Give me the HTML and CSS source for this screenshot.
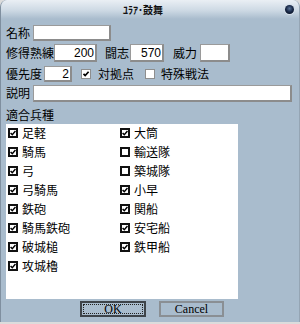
FILE: index.html
```html
<!DOCTYPE html>
<html lang="ja">
<head>
  <meta charset="UTF-8" />
  <title>ﾕﾗｱ･鼓舞</title>
  <link rel="stylesheet" href="styles.css">
</head>
<body>
  <div class="window">
    <div class="titlebar">
      <span class="title">ﾕﾗｱ･鼓舞</span>
      <span class="close"></span>
    </div>

    <div class="content">
      <div class="row r1">
        <span class="lbl">名称</span>
        <span class="field f-name"></span>
      </div>

      <div class="row r2">
        <span class="lbl">修得熟練</span>
        <span class="field f-skill">200</span>
        <span class="lbl l-spirit">闘志</span>
        <span class="field f-spirit">570</span>
        <span class="lbl l-power">威力</span>
        <span class="field f-power"></span>
      </div>

      <div class="row r3">
        <span class="lbl">優先度</span>
        <span class="field f-prio">2</span>
        <span class="box flat on c-base"><svg viewBox="0 0 8 8"><polyline points="1.5,3.8 3.2,5.6 6.6,1.8" /></svg></span>
        <span class="lbl l-base">対拠点</span>
        <span class="box flat c-special"></span>
        <span class="lbl l-special">特殊戦法</span>
      </div>

      <div class="row r4">
        <span class="lbl">説明</span>
        <span class="field f-desc"></span>
      </div>

      <div class="row r5">
        <span class="lbl">適合兵種</span>
      </div>

      <div class="list" id="list"></div>

      <div class="buttons">
        <button class="btn btn-ok"><span>OK</span></button>
        <button class="btn btn-cancel">Cancel</button>
      </div>
    </div>
  </div>

  <script>
    const units = [
      ['足軽', true], ['騎馬', true], ['弓', true], ['弓騎馬', true],
      ['鉄砲', true], ['騎馬鉄砲', true], ['破城槌', true], ['攻城櫓', true],
      ['大筒', true], ['輸送隊', false], ['築城隊', false], ['小早', true],
      ['関船', true], ['安宅船', true], ['鉄甲船', true]
    ];
    const list = document.getElementById('list');
    const tick = '<svg viewBox="0 0 6 6"><polyline points="0.6,2.9 2.3,4.7 5.5,1" /></svg>';

    units.forEach(([name, on]) => {
      const item = document.createElement('div');
      item.className = 'item';
      item.innerHTML = `<span class="box">${on ? tick : ''}</span><span class="name">${name}</span>`;
      list.appendChild(item);
    });
  </script>
</body>
</html>
```

FILE: styles.css
```css
* { margin: 0; padding: 0; box-sizing: border-box; }

html, body {
  width: 100%;
  height: 100%;
  background-color: #dcdcdc;
  font-family: "Noto Sans CJK JP", "Noto Sans", sans-serif;
  font-size: 12px;
  color: #000;
}

.window {
  width: 300px;
  height: 322px;
  background-color: #a9bccd;
  border-radius: 7px 7px 0 0;
  border-left: 1px solid #7f8f9f;
  border-right: 1px solid #95a5b4;
  display: flex;
  flex-direction: column;
  overflow: hidden;
}

.titlebar {
  height: 19px;
  flex-shrink: 0;
  display: flex;
  align-items: center;
  padding-right: 5px;
  background: linear-gradient(#eaeff4, #cdd9e4 55%, #a9bccd);
}

.title {
  flex: 1;
  text-align: center;
  font-size: 10px;
  line-height: 19px;
  font-weight: bold;
  color: #111;
}

.close {
  width: 9px;
  height: 9px;
  border-radius: 50%;
  background: radial-gradient(circle at 50% 40%, #5a7396 0, #1c2d4c 45%, #0e1a30 70%);
  box-shadow: 0 0 0 1px #d3dde8;
}

.content {
  flex: 1;
  display: flex;
  flex-direction: column;
  padding: 5px 0 0 5px;
}

.row {
  display: flex;
  align-items: center;
}

.lbl {
  line-height: 16px;
  white-space: nowrap;
}

.field {
  display: block;
  background-color: #fff;
  border: 1px solid #9a9a9a;
  border-right: 2px solid #8c8c8c;
  border-bottom: 2px solid #8c8c8c;
  font-family: "Liberation Sans", sans-serif;
  font-size: 12px;
  text-align: right;
  padding-right: 1px;
}

.r1 { height: 17px; }
.f-name { margin-left: 3px; width: 78px; height: 16px; }

.r2 { height: 19px; margin-top: 2px; }
.f-skill { width: 43px; height: 18px; line-height: 16px; }
.l-spirit { margin-left: 8px; }
.f-spirit { margin-left: 1px; width: 34px; height: 18px; line-height: 16px; }
.l-power { margin-left: 9px; }
.f-power { margin-left: 3px; width: 30px; height: 18px; }

.r3 { height: 17px; margin-top: 3px; }
.f-prio { margin-left: 2px; width: 28px; height: 16px; line-height: 14px; }
.c-base { margin-left: 9px; }
.l-base { margin-left: 7px; }
.c-special { margin-left: 11px; }
.l-special { margin-left: 6px; }

.r4 { height: 18px; margin-top: 2px; }
.f-desc { margin-left: 3px; width: 259px; height: 17px; }

.r5 { height: 17px; margin-top: 4px; }

.box {
  width: 10px;
  height: 10px;
  flex-shrink: 0;
  display: flex;
  background-color: #fff;
  border: 2px solid #111;
}

.box.flat {
  width: 10px;
  height: 10px;
  border: 1px solid #8e8e8e;
}

.box svg {
  width: 100%;
  height: 100%;
}

.box polyline {
  fill: none;
  stroke: #000;
  stroke-width: 1.5;
}

.box.flat polyline { stroke-width: 1.7; }

.list {
  margin-top: 1px;
  width: 232px;
  height: 175px;
  background-color: #fff;
  padding-left: 2px;
  display: grid;
  grid-auto-flow: column;
  grid-template-rows: repeat(8, 19px);
  grid-template-columns: 112px 112px;
}

.item {
  display: flex;
  align-items: flex-start;
  padding-top: 4px;
}

.item .name {
  margin-left: 4px;
  margin-top: -3px;
  line-height: 16px;
}

.buttons {
  display: flex;
  margin-top: 2px;
  padding-left: 74px;
}

.btn {
  height: 16px;
  font-family: "Liberation Serif", serif;
  font-size: 12px;
  color: #000;
  background-color: #a9bccd;
  display: flex;
  align-items: center;
  justify-content: center;
}

.btn-ok {
  width: 66px;
  border: 2px solid #3e444a;
  padding: 1px;
}

.btn-ok span {
  flex: 1;
  align-self: stretch;
  display: flex;
  align-items: center;
  justify-content: center;
  border: 1px dotted #222;
  line-height: 10px;
}

.btn-cancel {
  width: 65px;
  margin-left: 13px;
  border: 2px solid #8a8f94;
}
```
